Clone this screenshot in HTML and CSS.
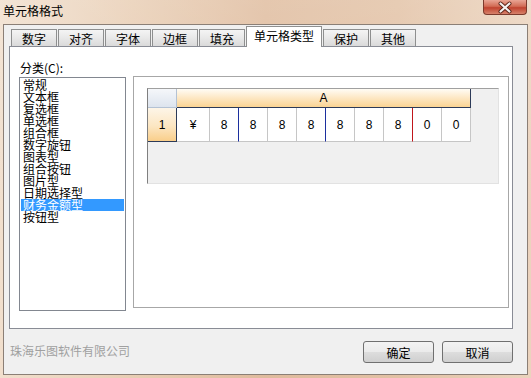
FILE: index.html
```html
<!DOCTYPE html>
<html lang="zh-CN">
<head>
  <meta charset="UTF-8" />
  <title>单元格格式</title>
  <link rel="stylesheet" href="styles.css">
</head>
<body>
  <div class="window">
    <div class="titlebar">
      <span class="title">单元格格式</span>
      <div class="close">
        <svg width="44" height="15" viewBox="0 0 44 15">
          <path d="M17.5 3.5 L26.5 11.5 M26.5 3.5 L17.5 11.5" stroke="#5b2418" stroke-width="4" stroke-linecap="round" />
          <path d="M17.5 3.5 L26.5 11.5 M26.5 3.5 L17.5 11.5" stroke="#f4f1f0" stroke-width="2.2" stroke-linecap="round" />
        </svg>
      </div>
    </div>

    <div class="client">
      <div class="tabs">
        <div class="tab">数字</div>
        <div class="tab">对齐</div>
        <div class="tab">字体</div>
        <div class="tab">边框</div>
        <div class="tab">填充</div>
        <div class="tab active">单元格类型</div>
        <div class="tab">保护</div>
        <div class="tab">其他</div>
      </div>

      <div class="panel">
        <div class="label">分类(C):</div>
        <div class="panel-body">
          <ul class="list">
            <li>常规</li>
            <li>文本框</li>
            <li>复选框</li>
            <li>单选框</li>
            <li>组合框</li>
            <li>数字旋钮</li>
            <li>图表型</li>
            <li>组合按钮</li>
            <li>图片型</li>
            <li>日期选择型</li>
            <li class="selected">财务金额型</li>
            <li>按钮型</li>
          </ul>

          <div class="preview">
            <div class="sheet">
              <div class="grid">
                <div class="corner"></div>
                <div class="col-head">A</div>
                <div class="row-head">1</div>
                <div class="cell">¥</div>
                <div class="cell sep">8</div>
                <div class="cell">8</div>
                <div class="cell">8</div>
                <div class="cell sep">8</div>
                <div class="cell">8</div>
                <div class="cell">8</div>
                <div class="cell dot">8</div>
                <div class="cell">0</div>
                <div class="cell">0</div>
              </div>
            </div>
          </div>
        </div>
      </div>

      <div class="footer">
        <span class="company">珠海乐图软件有限公司</span>
        <div class="buttons">
          <button type="button">确定</button>
          <button type="button">取消</button>
        </div>
      </div>
    </div>
  </div>
</body>
</html>
```

FILE: styles.css
```css
body {
  margin: 0;
  font-family: "Noto Sans CJK SC", "Noto Sans", sans-serif;
  font-size: 12px;
  color: #000;
}
.window {
  width: 531px;
  height: 378px;
  box-sizing: border-box;
  padding: 0 3px 3px;
  display: flex;
  flex-direction: column;
  background:
    linear-gradient(rgba(255, 255, 255, 0.18), rgba(255, 255, 255, 0) 60%),
    linear-gradient(90deg, #f1dfcd 0%, #e8cdb3 25%, #dfbb9d 50%, #e2c1a4 75%, #ebd3bd 100%);
}
.titlebar {
  height: 24px;
  display: flex;
  justify-content: space-between;
  align-items: flex-start;
}
.title {
  padding-top: 3px;
  line-height: 16px;
}
.close {
  width: 44px;
  height: 15px;
  margin-right: 1px;
  box-sizing: border-box;
  border: 1px solid #7c3a2c;
  border-top: none;
  border-radius: 0 0 4px 4px;
  background: linear-gradient(#e9a594, #d26c55 45%, #c0432f 55%, #d7826b);
  overflow: hidden;
}
.close svg {
  display: block;
  margin: 0 -1px;
}
.client {
  flex: 1;
  border: 1px solid #8b7f76;
  background: #f0f0f0;
  display: flex;
  flex-direction: column;
}
/* tab strip */
.tabs {
  display: flex;
  align-items: flex-end;
  height: 21px;
  padding: 1px 0 0 7px;
  margin-bottom: -1px;
  position: relative;
  z-index: 1;
}
.tab {
  width: 46px;
  height: 17px;
  box-sizing: border-box;
  margin: 0 1px 1px 0;
  border: 1px solid #8e8f8f;
  border-bottom: none;
  background: linear-gradient(#f4f4f4, #e8e8e8 50%, #dadada);
  text-align: center;
  line-height: 17px;
}
.tab.active {
  width: 76px;
  height: 21px;
  margin-bottom: 0;
  background: #fff;
  line-height: 18px;
}
/* tab page */
.panel {
  margin-left: 5px;
  width: 504px;
  height: 283px;
  box-sizing: border-box;
  border: 1px solid #898c95;
  background: #fff;
  padding: 14px 0 0 9px;
}
.label {
  line-height: 14px;
  padding-left: 1px;
  margin-bottom: 2px;
}
.panel-body {
  display: flex;
  align-items: flex-start;
  gap: 7px;
}
.list {
  width: 107px;
  height: 234px;
  box-sizing: border-box;
  margin: 0;
  padding: 1px 1px 0;
  list-style: none;
  border: 1px solid #828790;
}
.list li {
  height: 12px;
  line-height: 12px;
  padding-left: 2px;
  white-space: nowrap;
}
.list li.selected {
  background: #3399ff;
  color: #fff;
}
.preview {
  width: 376px;
  height: 232px;
  margin-top: -1px;
  box-sizing: border-box;
  border: 1px solid #a7a7a7;
  padding: 11px 0 0 13px;
}
.sheet {
  width: 352px;
  height: 96px;
  box-sizing: border-box;
  border-left: 1px solid #7f7f7f;
  border-top: 1px solid #a0a0a0;
  border-right: 1px solid #e2e2e2;
  border-bottom: 1px solid #e2e2e2;
  background: #f0f0f0;
}
.grid {
  display: grid;
  grid-template-columns: 29px 33px repeat(9, 29px);
  grid-template-rows: 19px 34px;
  font-family: "Liberation Sans", sans-serif;
  font-size: 12px;
}
.grid > div {
  box-sizing: border-box;
  display: flex;
  align-items: center;
  justify-content: center;
}
.corner {
  background: linear-gradient(#f5f7fa, #dde4ee);
  border-right: 1px solid #b4c2d4;
  border-bottom: 1px solid #b4c2d4;
}
.col-head {
  grid-column: 2 / -1;
  background: linear-gradient(#fffcf5, #fde9c8 45%, #fbd493);
  border-right: 1px solid #2c3a58;
  border-bottom: 1px solid #2c3a58;
}
.row-head {
  background: linear-gradient(#fdf5e8, #fce6c2 55%, #f9ce8a);
  border-right: 1px solid #2c3a58;
  border-bottom: 1px solid #2c3a58;
}
.cell {
  background: #fff;
  border-right: 1px solid #c6c6c6;
  border-bottom: 1px solid #c6c6c6;
}
.cell.sep {
  border-right-color: #1c2f9e;
}
.cell.dot {
  border-right-color: #c0161b;
}
/* bottom row */
.footer {
  display: flex;
  justify-content: space-between;
  align-items: center;
  padding: 12px 14px 0 6px;
}
.company {
  color: #a0a0a0;
  margin-top: -3px;
}
.buttons {
  display: flex;
  gap: 8px;
}
.buttons button {
  width: 71px;
  height: 22px;
  padding: 0;
  border: 1px solid #707070;
  border-radius: 3px;
  background: linear-gradient(#f3f3f3, #ebebeb 48%, #dddddd 52%, #cfcfcf);
  font-family: inherit;
  font-size: 12px;
  color: #000;
}
```
